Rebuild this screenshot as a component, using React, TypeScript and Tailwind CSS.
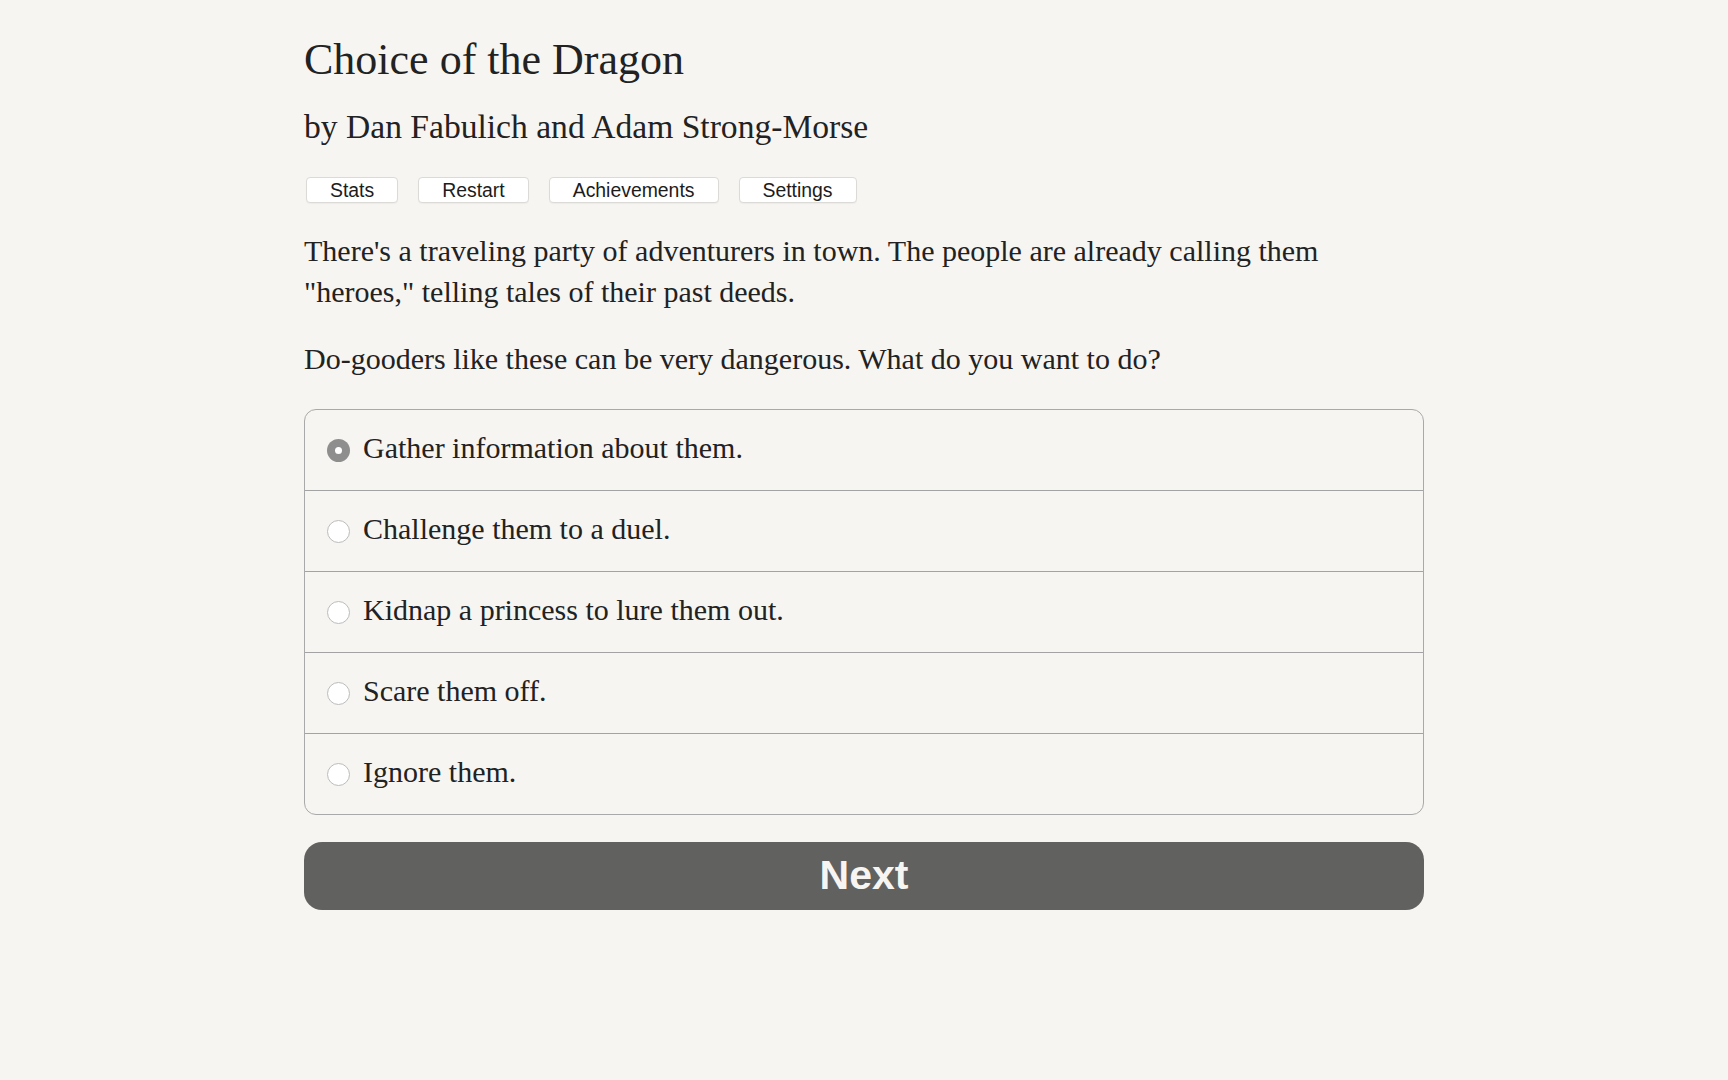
import React, { useState } from "react";

const serif = "font-['Liberation_Serif',_'Times_New_Roman',_serif]";
const sans = "font-['Liberation_Sans',_Arial,_sans-serif]";

const options = [
  "Gather information about them.",
  "Challenge them to a duel.",
  "Kidnap a princess to lure them out.",
  "Scare them off.",
  "Ignore them.",
];

const menu = ["Stats", "Restart", "Achievements", "Settings"];

function Radio({ checked }: { checked: boolean }) {
  if (checked) {
    return (
      <span className="flex h-[23px] w-[23px] shrink-0 items-center justify-center rounded-full bg-[#8e8e8f]">
        <span className="h-[7px] w-[7px] rounded-full bg-white" />
      </span>
    );
  }
  return (
    <span className="h-[23px] w-[23px] shrink-0 rounded-full border border-[#bcbcbc] bg-white" />
  );
}

export default function App() {
  const [choice, setChoice] = useState(0);

  return (
    <div className={`min-h-screen w-full bg-[#f7f5f2] text-[#222222] ${serif}`}>
      <div className="mx-auto w-[1120px] pt-[34px]">
        <h1 className="text-[44px] leading-[52px] font-normal">Choice of the Dragon</h1>
        <h2 className="mt-[21px] text-[33.6px] leading-[40px] font-normal">
          by Dan Fabulich and Adam Strong-Morse
        </h2>

        <div className="mt-[30px] ml-[2px] flex gap-[20px]">
          {menu.map((m) => (
            <button
              key={m}
              className={`h-[26px] rounded-[4px] border border-[#dcdad6] bg-white px-[23px] text-[19.4px] leading-[24px] text-[#1c1c1c] shadow-[0_1px_1px_rgba(0,0,0,0.04)] ${sans}`}
            >
              {m}
            </button>
          ))}
        </div>

        <p className="mt-[27px] text-[30px] leading-[41px]">
          There's a traveling party of adventurers in town. The people are already calling them
          "heroes," telling tales of their past deeds.
        </p>
        <p className="mt-[26px] text-[30px] leading-[41px]">
          Do-gooders like these can be very dangerous. What do you want to do?
        </p>

        <div className="mt-[30px] overflow-hidden rounded-[12px] border border-[#a9a9a9]">
          {options.map((o, i) => (
            <label
              key={o}
              onClick={() => setChoice(i)}
              className={`flex cursor-pointer items-center pl-[22px] ${
                i > 0 ? "h-[81px] border-t border-[#a3a3a3]" : "h-[80px]"
              }`}
            >
              <Radio checked={choice === i} />
              <span className="mb-[5px] ml-[13px] text-[30px] leading-[38px]">{o}</span>
            </label>
          ))}
        </div>

        <button
          className={`mt-[27px] flex h-[68px] w-full items-center justify-center rounded-[18px] bg-[#61615f] text-[41px] font-bold text-[#f7f5f2] ${sans}`}
        >
          Next
        </button>
      </div>
    </div>
  );
}
